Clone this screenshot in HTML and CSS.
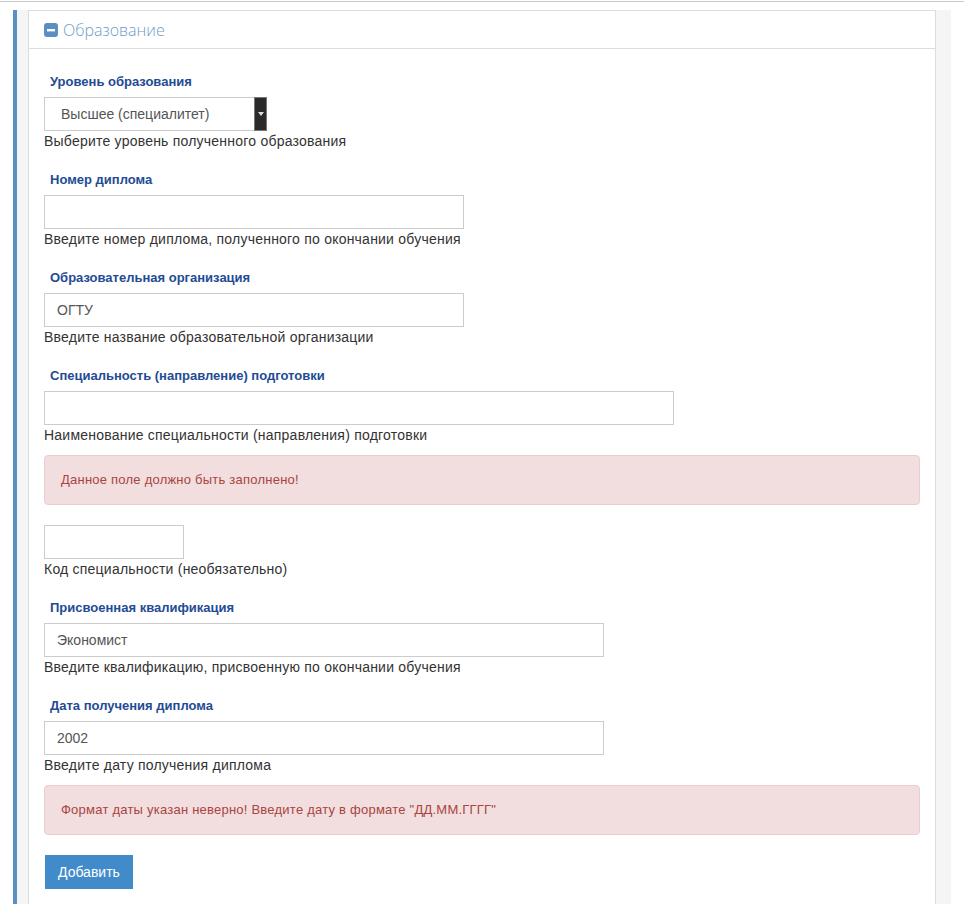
FILE: index.html
```html
<!DOCTYPE html>
<html lang="ru">
<head>
<meta charset="utf-8">
<title>Образование</title>
<link rel="stylesheet" href="styles.css">
</head>
<body>
<div class="topline"></div>
<div class="wrap">
  <div class="panel">
    <div class="panel-heading">
      <svg class="icon" width="14" height="14" viewBox="0 0 14 14"><rect x="0" y="0" width="14" height="14" rx="3" fill="#5b8fc2"/><rect x="3" y="6" width="8" height="2.4" fill="#fff"/></svg>
      <span class="title">Образование</span>
    </div>
    <div class="panel-body">
      <div class="group">
        <label class="lbl">Уровень образования</label>
        <div class="select">
          <span class="select-text">Высшее (специалитет)</span>
          <span class="select-btn"><svg width="6" height="4" viewBox="0 0 6 4"><path d="M0 0h6L3 4z" fill="#ddd"/></svg></span>
        </div>
        <div class="help">Выберите уровень полученного образования</div>
      </div>
      <div class="group">
        <label class="lbl">Номер диплома</label>
        <div class="input w420"></div>
        <div class="help">Введите номер диплома, полученного по окончании обучения</div>
      </div>
      <div class="group">
        <label class="lbl">Образовательная организация</label>
        <div class="input w420">ОГТУ</div>
        <div class="help">Введите название образовательной организации</div>
      </div>
      <div class="group">
        <label class="lbl">Специальность (направление) подготовки</label>
        <div class="input w630"></div>
        <div class="help">Наименование специальности (направления) подготовки</div>
        <div class="alert">Данное поле должно быть заполнено!</div>
      </div>
      <div class="group">
        <div class="input w140"></div>
        <div class="help">Код специальности (необязательно)</div>
      </div>
      <div class="group">
        <label class="lbl">Присвоенная квалификация</label>
        <div class="input w560">Экономист</div>
        <div class="help">Введите квалификацию, присвоенную по окончании обучения</div>
      </div>
      <div class="group">
        <label class="lbl">Дата получения диплома</label>
        <div class="input w560">2002</div>
        <div class="help">Введите дату получения диплома</div>
        <div class="alert">Формат даты указан неверно! Введите дату в формате "ДД.ММ.ГГГГ"</div>
      </div>
      <button class="btn">Добавить</button>
    </div>
  </div>
</div>
</body>
</html>
```
FILE: styles.css
```css
html, body {
  margin: 0;
  padding: 0;
  background: #fff;
  font-family: "Liberation Sans", Arial, sans-serif;
  font-size: 14px;
  color: #333;
}
.topline {
  margin-top: 1px;
  height: 1px;
  background: #c8c8c8;
}
.wrap {
  margin-top: 8px;
  margin-left: 13px;
  width: 908px;
  background: #f5f5f5;
  border-left: 4px solid #5b8fc2;
  padding: 0 15px 0 11px;
  box-sizing: content-box;
}
.panel {
  background: #fff;
  border: 1px solid #ddd;
  border-bottom: none;
}
.panel-heading {
  height: 37px;
  border-bottom: 1px solid #ddd;
  display: flex;
  align-items: center;
  padding: 0 15px;
  gap: 5px;
}
.icon {
  display: block;
  margin-top: 1px;
}
.title {
  font-family: "Open Sans", "Liberation Sans", sans-serif;
  font-weight: 300;
  font-size: 16px;
  color: #6d9cc9;
}
.panel-body {
  padding: 24px 15px 20px 15px;
}
.group {
  margin-bottom: 20px;
}
.lbl {
  display: block;
  font-size: 13px;
  font-weight: bold;
  line-height: 18px;
  color: #234b95;
  padding-left: 6px;
  margin-bottom: 6px;
}
.select {
  width: 223px;
  height: 34px;
  box-sizing: border-box;
  border: 1px solid #ccc;
  display: flex;
  align-items: stretch;
}
.select-text {
  flex: 1;
  padding-left: 16px;
  line-height: 32px;
  color: #555;
}
.select-btn {
  width: 11px;
  background: #2a2a2a;
  border: 1px solid #777;
  margin: -1px -1px -1px 0;
  display: flex;
  align-items: center;
  justify-content: center;
}
.input {
  height: 34px;
  box-sizing: border-box;
  border: 1px solid #ccc;
  padding: 0 12px;
  line-height: 32px;
  color: #555;
}
.w420 { width: 420px; }
.w630 { width: 630px; }
.w140 { width: 140px; }
.w560 { width: 560px; }
.help {
  line-height: 20px;
  color: #333;
  letter-spacing: 0.22px;
}
.alert {
  margin-top: 10px;
  background: #f2dede;
  border: 1px solid #ebccd1;
  border-radius: 4px;
  padding: 15px 16px;
  font-size: 13px;
  line-height: 18px;
  color: #a94442;
  letter-spacing: 0.23px;
}
.btn {
  display: block;
  margin-left: 1px;
  margin-top: 1px;
  background: #428bca;
  border: 1px solid #428bca;
  color: #fff;
  font-family: "Liberation Sans", Arial, sans-serif;
  font-size: 14px;
  line-height: 20px;
  padding: 6px 12px;
  height: 34px;
}
```
